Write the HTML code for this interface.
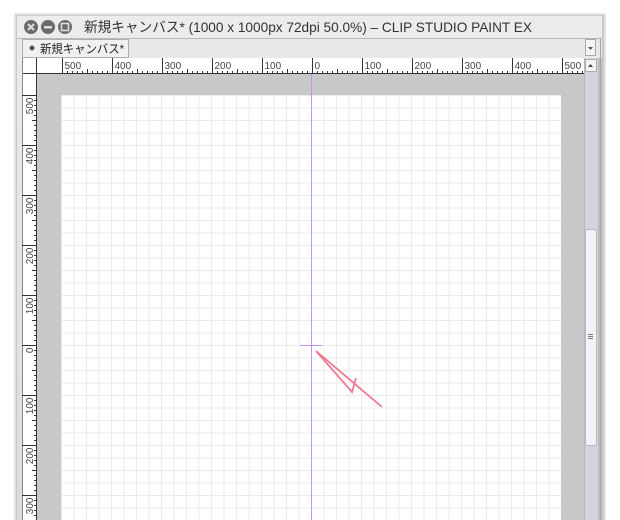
<!DOCTYPE html>
<html><head><meta charset="utf-8"><style>
html,body{margin:0;padding:0;background:#fff;width:620px;height:520px;overflow:hidden}
svg{display:block}
text{font-family:"Liberation Sans","Noto Sans CJK JP",sans-serif}
</style></head><body>
<svg id="s" width="620" height="520" xmlns="http://www.w3.org/2000/svg">
<defs>
<pattern id="grid" x="61" y="95" width="12.5" height="12.5" patternUnits="userSpaceOnUse">
<path d="M0 0.5H12.5M0.5 0V12.5" stroke="#ebebeb" stroke-width="1" fill="none"/>
</pattern>
<linearGradient id="tb" x1="0" y1="0" x2="0" y2="1"><stop offset="0" stop-color="#ececec"/><stop offset="1" stop-color="#dcdcdc"/></linearGradient>
</defs>
<rect x="14" y="13" width="592" height="520" fill="#e4e4e4"/>
<rect x="16" y="15" width="588" height="510" fill="#c8c8c8"/>
<rect x="17" y="16" width="585" height="510" fill="url(#tb)"/>
<circle cx="31" cy="27" r="7" fill="#6a6a6a"/>
<path d="M28 24L34 30M34 24L28 30" stroke="#ddd" stroke-width="2"/>
<circle cx="48" cy="27" r="7" fill="#6a6a6a"/>
<rect x="44" y="26" width="8" height="2.5" fill="#ddd"/>
<circle cx="65" cy="27" r="7" fill="#6a6a6a"/>
<rect x="61.5" y="23.5" width="7" height="7" fill="none" stroke="#ddd" stroke-width="1.6"/>
<text x="84" y="32" font-size="14" fill="#333" textLength="448" lengthAdjust="spacingAndGlyphs">新規キャンバス* (1000 x 1000px 72dpi 50.0%)  – CLIP STUDIO PAINT EX</text>
<rect x="17" y="38" width="585" height="20" fill="#e8e8e8"/>
<line x1="17" y1="38.5" x2="602" y2="38.5" stroke="#b8b8b8"/>
<rect x="22.5" y="39.5" width="106" height="18" fill="#f0f0f0" stroke="#b0b0b0"/>
<circle cx="32" cy="48" r="2.5" fill="#555"/>
<text x="40" y="53" font-size="12" fill="#222" textLength="84" lengthAdjust="spacingAndGlyphs">新規キャンバス*</text>
<rect x="585.5" y="39.5" width="10" height="16" fill="#f4f4f4" stroke="#aaa"/>
<path d="M588 47h5l-2.5 3z" fill="#555"/>
<rect x="22" y="58" width="576" height="470" fill="#c8c8c8"/>
<rect x="61" y="95" width="500" height="430" fill="#fff"/>
<rect x="61" y="95" width="500" height="430" fill="url(#grid)"/>
<rect x="311" y="73" width="1" height="450" fill="#c490ff"/>
<rect x="300" y="345" width="22" height="1" fill="#c490ff"/>
<path d="M316 351L382 407M316 351L352 392L356 378" stroke="#f07890" stroke-width="1.8" fill="none" stroke-linejoin="miter"/>
<rect x="22" y="58" width="563" height="15" fill="#fff"/>
<rect x="22" y="73" width="15" height="450" fill="#fff"/>
<line x1="22" y1="73.5" x2="585" y2="73.5" stroke="#333"/>
<line x1="36.5" y1="58" x2="36.5" y2="520" stroke="#333"/>
<line x1="22.5" y1="58" x2="22.5" y2="520" stroke="#888"/>
<g id="rh"></g>
<g id="rv"></g>
<rect x="584" y="58" width="14" height="470" fill="#d4d5dc"/>
<line x1="584.5" y1="58" x2="584.5" y2="520" stroke="#b8b8b8"/>
<rect x="585.5" y="59.5" width="11" height="12" fill="#f4f4f4" stroke="#aaa"/>
<path d="M588 67h5l-2.5-3z" fill="#444"/>
<rect x="585.5" y="229.5" width="11" height="216" rx="2" fill="#f2f3f8" stroke="#b8b8c0"/>
<path d="M588 334.5h5M588 336.5h5M588 338.5h5" stroke="#777"/>
<rect x="598" y="58" width="4" height="470" fill="#bcbcbc"/>
<line x1="600.5" y1="38" x2="600.5" y2="520" stroke="#a8a8a8"/>
</svg>
<script>
var NS="http://www.w3.org/2000/svg";
function el(p,t,a,txt){var e=document.createElementNS(NS,t);for(var k in a)e.setAttribute(k,a[k]);if(txt)e.textContent=txt;p.appendChild(e);return e;}
var rh=document.getElementById('rh'),rv=document.getElementById('rv');
for(var u=-500;u<=540;u+=10){var x=312+u/2;if(x<38||x>584)continue;x=Math.round(x)+0.5;
 if(u%100==0){el(rh,'line',{x1:x,y1:58,x2:x,y2:73,stroke:'#333'});el(rh,'text',{x:x+2,y:69,'font-size':10,fill:'#444'},String(Math.abs(u)));}
 else{var h=(u%50==0)?4:2;el(rh,'line',{x1:x,y1:73-h,x2:x,y2:73,stroke:'#333'});}}
for(var u=-500;u<=360;u+=10){var y=345+u/2;if(y<74||y>520)continue;y=Math.round(y)+0.5;
 if(u%100==0){el(rv,'line',{x1:22,y1:y,x2:37,y2:y,stroke:'#333'});el(rv,'text',{x:0,y:0,'font-size':10,fill:'#444','text-anchor':'end',transform:'translate(33,'+(y+2)+') rotate(-90)'},String(Math.abs(u)));}
 else{var h=(u%50==0)?4:2;el(rv,'line',{x1:36-h,y1:y,x2:37,y2:y,stroke:'#333'});}}
</script>
</body></html>
